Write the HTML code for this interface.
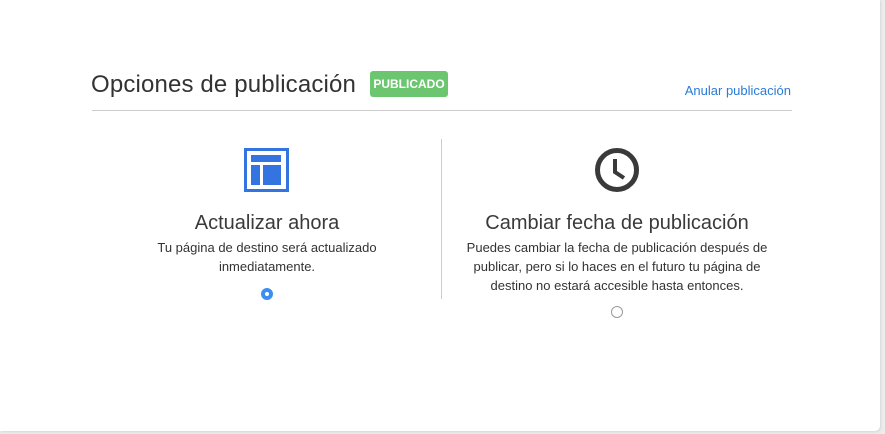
<!DOCTYPE html><html><head><style>
body{margin:0;width:885px;height:434px;background:#ececec;font-family:"Liberation Sans",sans-serif;overflow:hidden;position:relative}
.card{position:absolute;left:0;top:0;width:880px;height:431px;background:#fff;border-radius:0 0 5px 0;box-shadow:1px 1px 2px #d6d6d6}
.h{position:absolute;left:91px;top:71px;font-size:24px;color:#333;letter-spacing:0.15px}
.b{position:absolute;left:370px;top:71px;width:78px;height:26px;background:#6cc56f;border-radius:3px;color:#fff;font-weight:bold;font-size:12px;line-height:26px;text-align:center}
.l{position:absolute;right:89px;top:83px;font-size:13px;color:#2a7ad8}
.hr{position:absolute;left:92px;top:110px;width:700px;height:1px;background:#ccc}
.v{position:absolute;left:441px;top:139px;width:1px;height:160px;background:#ccc}
.col{position:absolute;text-align:center;color:#333}
.t{font-size:20px;margin:0;color:#3a3a3a}
.d{font-size:13px;line-height:19px;margin-top:3px}
.r{position:absolute;width:12px;height:12px;border-radius:50%;box-sizing:border-box}
</style></head><body><div class="card">
<div class="h">Opciones de publicación</div><div class="b">PUBLICADO</div>
<div class="l">Anular publicación</div><div class="hr"></div><div class="v"></div>
<svg style="position:absolute;left:244px;top:148px" width="45" height="44"><rect x="1.5" y="1.5" width="42" height="41" fill="none" stroke="#3474e0" stroke-width="3"/><rect x="7" y="7" width="30" height="7" fill="#3474e0"/><rect x="7" y="17" width="9" height="20" fill="#3474e0"/><rect x="19" y="17" width="18" height="20" fill="#3474e0"/></svg>
<svg style="position:absolute;left:594px;top:147px" width="46" height="46"><circle cx="23" cy="23" r="19.5" fill="none" stroke="#3a3a3a" stroke-width="5"/><path d="M21 12V25L30 31" fill="none" stroke="#3a3a3a" stroke-width="4"/></svg>
<div class="col" style="left:127px;width:280px;top:212px"><p class="t">Actualizar ahora</p><div class="d">Tu página de destino será actualizado<br>inmediatamente.</div></div>
<div class="col" style="left:457px;width:320px;top:212px"><p class="t">Cambiar fecha de publicación</p><div class="d">Puedes cambiar la fecha de publicación después de<br>publicar, pero si lo haces en el futuro tu página de<br>destino no estará accesible hasta entonces.</div></div>
<div class="r" style="left:261px;top:288px;background:#fff;border:4px solid #3b8ff0"></div>
<div class="r" style="left:611px;top:306px;border:1px solid #999"></div>
</div></body></html>
